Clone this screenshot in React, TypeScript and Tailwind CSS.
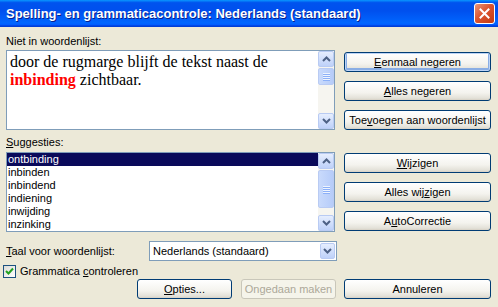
import React from 'react';

const ui = "font-['Liberation_Sans',Arial,sans-serif] text-[11px] leading-[13px] text-black";

const Chevron: React.FC<{ dir: 'up' | 'down' }> = ({ dir }) => (
  <svg width="9" height="6" viewBox="0 0 9 6">
    <path
      d={dir === 'up' ? 'M1 5 L4.5 1.5 L8 5' : 'M1 1 L4.5 4.5 L8 1'}
      fill="none"
      stroke="#4D6185"
      strokeWidth="2"
    />
  </svg>
);

const ArrowBtn: React.FC<{ dir: 'up' | 'down'; className?: string }> = ({ dir, className = '' }) => (
  <div
    className={`flex items-center justify-center rounded-[2px] border border-[#B9CBF3] bg-[linear-gradient(to_bottom,#E6EEFE,#BED1F9)] ${className}`}
  >
    <Chevron dir={dir} />
  </div>
);

const Thumb: React.FC<{ h: string }> = ({ h }) => (
  <div
    className={`mt-[1px] ${h} flex flex-col items-center justify-center gap-[1px] rounded-[2px] border border-[#B9CBF3] bg-[linear-gradient(to_right,#C9DAFC,#B6CCF9)]`}
  >
    {[0, 1, 2, 3].map((i) => (
      <div key={i} className="h-[1px] w-[7px] bg-[#EEF4FE] shadow-[0_1px_0_#8CB0F8]" />
    ))}
  </div>
);

const Scrollbar: React.FC<{ thumb: string }> = ({ thumb }) => (
  <div className="flex w-[16px] shrink-0 flex-col bg-[#F6F5F0]">
    <ArrowBtn dir="up" className="h-[16px]" />
    <div className="flex-1">
      <Thumb h={thumb} />
    </div>
    <ArrowBtn dir="down" className="h-[16px]" />
  </div>
);

const XpButton: React.FC<{
  children: React.ReactNode;
  w?: string;
  isDefault?: boolean;
  disabled?: boolean;
}> = ({ children, w = 'w-[147px]', isDefault, disabled }) => (
  <div
    className={`${w} flex h-[20px] shrink-0 items-center justify-center rounded-[3px] border ${
      disabled
        ? 'border-[#C9C7BA] bg-[#F5F4EA] text-[#ACA899]'
        : 'border-[#003C74] bg-[linear-gradient(to_bottom,#FFFFFF_0%,#F4F3EE_60%,#E3E1D8_90%,#D6D0C5_100%)]'
    } ${isDefault ? 'shadow-[inset_0_0_0_1px_#BCD4F6,inset_0_-1px_0_2px_#89ADE4]' : ''}`}
  >
    {children}
  </div>
);

const U: React.FC<{ children: React.ReactNode }> = ({ children }) => (
  <span className="underline underline-offset-[1px]">{children}</span>
);

export default function App() {
  const suggestions = ['ontbinding', 'inbinden', 'inbindend', 'indiening', 'inwijding', 'inzinking'];

  return (
    <div className={`flex h-[307px] w-[498px] flex-col overflow-hidden bg-[#ECE9D8] ${ui}`}>
      {/* title bar */}
      <div className="flex h-[27px] shrink-0 items-center justify-between bg-[linear-gradient(to_bottom,#0997FF_0%,#0053EE_10%,#0050EE_40%,#0066FF_85%,#005BFF_92%,#003DD7_96%,#003DD7_100%)] pl-[6px] pr-[3px]">
        <span className="font-['Liberation_Sans',Arial,sans-serif] text-[13px] font-bold leading-[16px] text-white [text-shadow:1px_1px_0_#0A1E8C]">
          Spelling- en grammaticacontrole: Nederlands (standaard)
        </span>
        <div className="flex h-[21px] w-[21px] items-center justify-center rounded-[3px] border border-white bg-[linear-gradient(135deg,#E8967A_0%,#DC5530_45%,#C23A12_100%)]">
          <svg width="11" height="11" viewBox="0 0 11 11">
            <path d="M1.5 1.5 L9.5 9.5 M9.5 1.5 L1.5 9.5" stroke="#fff" strokeWidth="2" strokeLinecap="square" />
          </svg>
        </div>
      </div>

      {/* body */}
      <div className="flex flex-col pl-[6px] pr-[7px]">
        {/* not in dictionary */}
        <div className="flex gap-[9px]">
          <div className="flex w-[329px] flex-col">
            <div className="mt-[8px]">Niet in woordenlijst:</div>
            <div className="mt-[2px] flex h-[80px] border border-[#7F9DB9] bg-white">
              <div className="flex-1 pl-[3px] pt-[2px] font-['Liberation_Serif','Times_New_Roman',serif] text-[16px] leading-[18px]">
                door de rugmarge blijft de tekst naast de
                <br />
                <span className="font-bold text-[#FF0000]">inbinding</span> zichtbaar.
              </div>
              <Scrollbar thumb="h-[17px]" />
            </div>
          </div>
          <div className="flex w-[147px] flex-col gap-[9px] pt-[25px]">
            <XpButton isDefault>
              <U>E</U>enmaal negeren
            </XpButton>
            <XpButton>
              <U>A</U>lles negeren
            </XpButton>
            <XpButton>
              Toe<U>v</U>oegen aan woordenlijst
            </XpButton>
          </div>
        </div>

        {/* suggestions */}
        <div className="flex gap-[9px]">
          <div className="flex w-[329px] flex-col">
            <div className="mt-[6px]">
              <U>S</U>uggesties:
            </div>
            <div className="mt-[3px] flex h-[80px] border border-[#7F9DB9] bg-white">
              <div className="flex-1">
                {suggestions.map((s, i) => (
                  <div
                    key={s}
                    className={`h-[13px] pl-[1px] ${i === 0 ? 'bg-[#0A0A5A] text-white' : ''}`}
                  >
                    {s}
                  </div>
                ))}
              </div>
              <Scrollbar thumb="h-[38px]" />
            </div>
          </div>
          <div className="flex w-[147px] flex-col gap-[9px] pt-[23px]">
            <XpButton>
              <U>W</U>ijzigen
            </XpButton>
            <XpButton>
              Alles wij<U>z</U>igen
            </XpButton>
            <XpButton>
              A<U>u</U>toCorrectie
            </XpButton>
          </div>
        </div>

        {/* language */}
        <div className="mt-[9px] flex items-center">
          <div className="w-[143px]">
            <U>T</U>aal voor woordenlijst:
          </div>
          <div className="flex h-[20px] w-[188px] items-center border border-[#7F9DB9] bg-white pl-[3px] pr-[1px]">
            <span className="flex-1">Nederlands (standaard)</span>
            <ArrowBtn dir="down" className="h-[16px] w-[15px]" />
          </div>
        </div>

        {/* grammar checkbox */}
        <div className="ml-[-3px] mt-[4px] flex items-center gap-[4px]">
          <div className="flex h-[13px] w-[13px] items-center justify-center border border-[#1C5180] bg-[linear-gradient(135deg,#DCDCD7,#FFFFFF)]">
            <svg width="9" height="9" viewBox="0 0 9 9">
              <path d="M1 4 L3.5 6.5 L8 1.5" fill="none" stroke="#21A121" strokeWidth="2" />
            </svg>
          </div>
          <span>
            Grammatica <U>c</U>ontroleren
          </span>
        </div>

        {/* bottom buttons */}
        <div className="mt-[1px] flex justify-end">
          <XpButton w="w-[95px]">
            <U>O</U>pties...
          </XpButton>
          <div className="w-[9px]" />
          <XpButton w="w-[95px]" disabled>
            Ongedaan maken
          </XpButton>
          <div className="w-[8px]" />
          <XpButton>Annuleren</XpButton>
        </div>
      </div>
    </div>
  );
}
